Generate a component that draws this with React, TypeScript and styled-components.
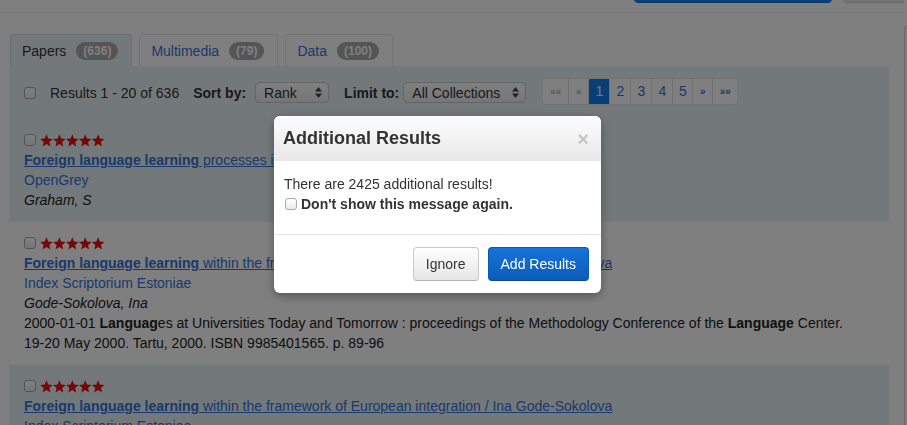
import React from "react";
import styled, { createGlobalStyle } from "styled-components";

const LINK = "#3472d8";
const SHADE = "#e7f3f5";

const GlobalStyle = createGlobalStyle`
	html, body {
		margin: 0;
		padding: 0;
	}
	body {
		font-family: "Liberation Sans", Arial, sans-serif;
		font-size: 14px;
		color: #333;
		background: #fff;
		overflow: hidden;
	}
	* {
		box-sizing: border-box;
	}
`;

const Page = styled.div`
	display: flex;
	width: 907px;
	height: 425px;
	overflow: hidden;
`;

const Main = styled.div`
	flex: 1;
	min-width: 0;
`;

const ScrollTrack = styled.div`
	width: 3px;
	margin-top: 25px;
	border-left: 1px solid #d6d6d6;
	border-top-left-radius: 3px;
	background: #f6f6f6;
`;

const TopBar = styled.div`
	height: 13px;
	display: flex;
	align-items: flex-end;
	gap: 11px;
	padding-left: 634px;
	border-bottom: 1px solid #e6e6e6;
	overflow: hidden;
`;

const TopButton = styled.div<{ $primary?: boolean; $w: number }>`
	flex: none;
	width: ${(p) => p.$w}px;
	height: 30px;
	margin-bottom: 9px;
	border-radius: 4px;
	background: ${(p) => (p.$primary ? "#117ef0" : "linear-gradient(#fff, #e8e8e8)")};
	border: 1px solid ${(p) => (p.$primary ? "#0d6fd6" : "#cfcfcf")};
`;

const Tabs = styled.div`
	display: flex;
	gap: 7px;
	height: 32px;
	margin: 21px 0 0 10px;
`;

const Tab = styled.div<{ $active?: boolean }>`
	display: flex;
	align-items: center;
	gap: 10px;
	padding: 0 13px 0 11px;
	border: 1px solid ${(p) => (p.$active ? "#d5e0e2" : "#e8e8e8")};
	border-bottom: none;
	border-radius: 4px 4px 0 0;
	background: ${(p) => (p.$active ? SHADE : "#fff")};
	color: ${(p) => (p.$active ? "#333" : LINK)};
`;

const Badge = styled.span`
	height: 18px;
	line-height: 18px;
	padding: 0 7px;
	border-radius: 9px;
	background: #aaa;
	color: #fff;
	font-size: 12px;
	font-weight: bold;
`;

const Toolbar = styled.div`
	display: flex;
	align-items: center;
	width: 880px;
	height: 53px;
	margin-left: 9px;
	padding-left: 15px;
	background: ${SHADE};
`;

const Check = styled.input.attrs({ type: "checkbox" })`
	appearance: none;
	flex: none;
	width: 12px;
	height: 12px;
	margin: 0;
	border: 1px solid #a9a9a9;
	border-radius: 3px;
	background: linear-gradient(#fff, #ececec);
`;

const ToolText = styled.span<{ $bold?: boolean; $mr: number }>`
	margin-right: ${(p) => p.$mr}px;
	font-weight: ${(p) => (p.$bold ? "bold" : "normal")};
	white-space: nowrap;
`;

const Select = styled.div<{ $w: number; $mr: number }>`
	display: flex;
	align-items: center;
	justify-content: space-between;
	width: ${(p) => p.$w}px;
	height: 21px;
	margin-right: ${(p) => p.$mr}px;
	padding: 0 6px 0 8px;
	border: 1px solid #c9c9c9;
	border-radius: 4px;
	background: linear-gradient(#fff, #ededed);
	white-space: nowrap;
`;

const Pager = styled.div`
	display: flex;
	height: 27px;
	margin-bottom: 3px;
	border: 1px solid #e3e3e3;
	border-radius: 4px;
	background: #fff;
	overflow: hidden;
`;

const PageItem = styled.span<{ $w: number; $active?: boolean; $disabled?: boolean; $small?: boolean }>`
	display: flex;
	align-items: center;
	justify-content: center;
	width: ${(p) => p.$w}px;
	font-size: ${(p) => (p.$small ? "10px" : "14px")};
	font-weight: ${(p) => (p.$small ? "bold" : "normal")};
	color: ${(p) => (p.$active ? "#eef2f8" : p.$disabled ? "#a9b4c4" : LINK)};
	background: ${(p) => (p.$active ? "#117ef0" : "transparent")};
	& + & {
		border-left: 1px solid #e3e3e3;
	}
`;

const Result = styled.div<{ $shaded?: boolean }>`
	width: 880px;
	margin-left: 9px;
	padding: 11px 15px 12px;
	line-height: 20px;
	background: ${(p) => (p.$shaded ? SHADE : "#fff")};
`;

const RatingLine = styled.div`
	display: flex;
	align-items: center;
	gap: 4px;
	height: 20px;
`;

const Title = styled.a`
	display: block;
	color: ${LINK};
	text-decoration: underline;
	white-space: nowrap;
	b {
		font-weight: bold;
	}
`;

const Source = styled.div`
	color: ${LINK};
`;

const Author = styled.div`
	font-style: italic;
	color: #222;
`;

const Desc = styled.div`
	white-space: nowrap;
	color: #222;
`;

const Overlay = styled.div`
	position: fixed;
	inset: 0;
	background: rgba(0, 0, 0, 0.5);
`;

const Modal = styled.div`
	position: fixed;
	left: 274px;
	top: 116px;
	width: 327px;
	border-radius: 6px;
	background: #fff;
	box-shadow: 0 3px 10px rgba(0, 0, 0, 0.35);
	overflow: hidden;
`;

const ModalHeader = styled.div`
	display: flex;
	align-items: center;
	justify-content: space-between;
	height: 45px;
	padding: 0 12px 0 9px;
	background: linear-gradient(#fdfdfd, #e8e8e8);
	h3 {
		margin: 0;
		font-size: 18px;
		font-weight: bold;
		color: #333;
	}
`;

const Close = styled.span`
	font-size: 20px;
	font-weight: bold;
	color: #c6c6c6;
	line-height: 1;
`;

const ModalBody = styled.div`
	padding: 13px 10px 20px;
	line-height: 20px;
	color: #333;
`;

const CheckLine = styled.label`
	display: flex;
	align-items: center;
	gap: 4px;
	font-weight: bold;
	padding-left: 1px;
`;

const ModalFooter = styled.div`
	display: flex;
	justify-content: flex-end;
	gap: 9px;
	padding: 12px;
	border-top: 1px solid #e5e5e5;
`;

const Button = styled.button<{ $primary?: boolean }>`
	height: 34px;
	padding: 0 12px;
	border-radius: 4px;
	font-family: inherit;
	font-size: 14px;
	border: 1px solid ${(p) => (p.$primary ? "#0a58b0" : "#c8c8c8")};
	border-bottom-color: ${(p) => (p.$primary ? "#084c99" : "#b3b3b3")};
	background: ${(p) => (p.$primary ? "linear-gradient(#1673d9, #0b5cb9)" : "linear-gradient(#fff, #e6e6e6)")};
	color: ${(p) => (p.$primary ? "#fff" : "#333")};
`;

const Stars: React.FC = () => (
	<svg width="65" height="13" viewBox="0 0 65 13">
		{[0, 1, 2, 3, 4].map((i) => (
			<polygon
				key={i}
				transform={`translate(${i * 12.9} 0)`}
				fill="#e81010"
				points="6.5,0.3 8.26,4.57 12.8,4.96 9.35,7.93 10.4,12.5 6.5,10 2.6,12.5 3.65,7.93 0.2,4.96 4.74,4.57"
			/>
		))}
	</svg>
);

const UpDown: React.FC = () => (
	<svg width="7" height="11" viewBox="0 0 7 11">
		<polygon points="0,4.5 3.5,0 7,4.5" fill="#444" />
		<polygon points="0,6.5 3.5,11 7,6.5" fill="#444" />
	</svg>
);

const pages = [
	{ label: "««", w: 25, disabled: true, small: true },
	{ label: "«", w: 20, disabled: true, small: true },
	{ label: "1", w: 21, active: true },
	{ label: "2", w: 21 },
	{ label: "3", w: 21 },
	{ label: "4", w: 21 },
	{ label: "5", w: 20 },
	{ label: "»", w: 20, small: true },
	{ label: "»»", w: 25, small: true },
];

const App: React.FC = () => {
	return (
		<>
			<GlobalStyle />
			<Page>
				<Main>
					<TopBar>
						<TopButton $primary $w={198} />
						<TopButton $w={80} />
					</TopBar>
					<Tabs>
						<Tab $active>
							Papers <Badge>(636)</Badge>
						</Tab>
						<Tab>
							Multimedia <Badge>(79)</Badge>
						</Tab>
						<Tab>
							Data <Badge>(100)</Badge>
						</Tab>
					</Tabs>
					<Toolbar>
						<Check style={{ marginRight: 14 }} />
						<ToolText $mr={14}>Results 1 - 20 of 636</ToolText>
						<ToolText $bold $mr={9}>Sort by:</ToolText>
						<Select $w={74} $mr={15}>
							Rank <UpDown />
						</Select>
						<ToolText $bold $mr={4}>Limit to:</ToolText>
						<Select $w={123} $mr={16}>
							All Collections <UpDown />
						</Select>
						<Pager>
							{pages.map((p) => (
								<PageItem key={p.label} $w={p.w} $active={p.active} $disabled={p.disabled} $small={p.small}>
									{p.label}
								</PageItem>
							))}
						</Pager>
					</Toolbar>
					<Result $shaded>
						<RatingLine>
							<Check />
							<Stars />
						</RatingLine>
						<Title>
							<b>Foreign language learning</b> processes in adults
						</Title>
						<Source>OpenGrey</Source>
						<Author>Graham, S</Author>
					</Result>
					<Result>
						<RatingLine>
							<Check />
							<Stars />
						</RatingLine>
						<Title>
							<b>Foreign language learning</b> within the framework of European integration / Ina Gode-Sokolova
						</Title>
						<Source>Index Scriptorium Estoniae</Source>
						<Author>Gode-Sokolova, Ina</Author>
						<Desc>
							2000-01-01 <b>Languag</b>es at Universities Today and Tomorrow : proceedings of the Methodology Conference of the <b>Language</b> Center.
						</Desc>
						<Desc>19-20 May 2000. Tartu, 2000. ISBN 9985401565. p. 89-96</Desc>
					</Result>
					<Result $shaded>
						<RatingLine>
							<Check />
							<Stars />
						</RatingLine>
						<Title>
							<b>Foreign language learning</b> within the framework of European integration / Ina Gode-Sokolova
						</Title>
						<Source>Index Scriptorium Estoniae</Source>
					</Result>
				</Main>
				<ScrollTrack />
			</Page>
			<Overlay />
			<Modal>
				<ModalHeader>
					<h3>Additional Results</h3>
					<Close>×</Close>
				</ModalHeader>
				<ModalBody>
					<div>There are 2425 additional results!</div>
					<CheckLine>
						<Check />
						Don't show this message again.
					</CheckLine>
				</ModalBody>
				<ModalFooter>
					<Button>Ignore</Button>
					<Button $primary>Add Results</Button>
				</ModalFooter>
			</Modal>
		</>
	);
};

export default App;
